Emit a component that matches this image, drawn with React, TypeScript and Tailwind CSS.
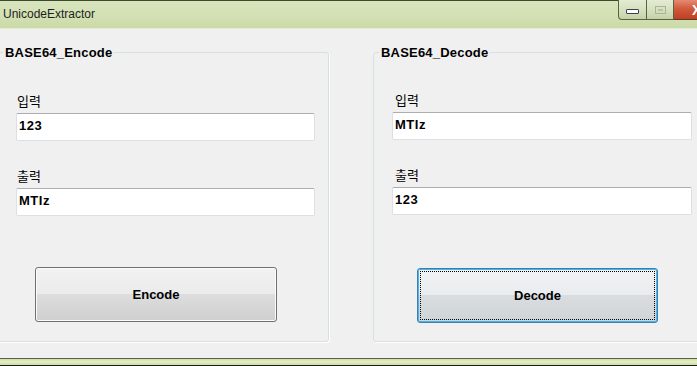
import React from 'react'

const ui = { fontFamily: '"Liberation Sans", Arial, sans-serif' }
const kr = { fontFamily: '"Noto Sans CJK KR", "Noto Sans", sans-serif' }

function Field({ label, value, width, labelOffset }: { label: string; value: string; width: string; labelOffset: string }) {
  return (
    <div className="flex flex-col">
      <div className={`text-[13px] leading-[16px] text-black ${labelOffset}`} style={kr}>
        {label}
      </div>
      <div
        className={`mt-[4px] h-[28px] ${width} bg-white border border-[#dbdfe6] border-t-[#abadb3] rounded-[2px] pl-[2px] pt-[4px] text-[13px] leading-[15px] tracking-[0.5px] font-bold text-black`}
        style={ui}
      >
        {value}
      </div>
    </div>
  )
}

export default function App() {
  return (
    <div className="w-[697px] h-[366px] overflow-hidden flex flex-col bg-[#f0f0f0]" style={ui}>
      {/* Title bar */}
      <div className="h-[29px] shrink-0 flex items-start justify-between border-t border-[#3c4a2a] border-b border-b-[#e4ebd3] bg-[linear-gradient(to_bottom,#d8e4bd_0%,#d4e1b5_50%,#cbdaa7_100%)]">
        <span className="ml-[3px] mt-[6px] text-[12px] leading-[15px] text-[#1e1e1e]" style={ui}>
          UnicodeExtractor
        </span>
        <div className="flex items-start -mt-px -mr-[21px]">
          <div className="w-[29px] h-[20px] flex items-center justify-center border border-t-0 border-[#56653f] rounded-bl-[4px] bg-[linear-gradient(to_bottom,#e3ebd2_0%,#d6e1c0_50%,#c4d2a6_100%)]">
            <div className="mt-[3px] w-[13px] h-[5px] bg-white border border-[#3a3f52] rounded-[1px]" />
          </div>
          <div className="w-[27px] h-[20px] flex items-center justify-center border border-t-0 border-l-0 border-[#56653f] bg-[linear-gradient(to_bottom,#e3ebd2_0%,#d6e1c0_50%,#c4d2a6_100%)]">
            <div className="w-[11px] h-[8px] border border-[#a9b39a] flex items-center justify-center">
              <div className="w-[5px] h-[2px] border border-[#b8c1a9]" />
            </div>
          </div>
          <div className="w-[44px] h-[20px] flex items-center justify-start pl-[18px] border border-t-0 border-l-0 border-[#5a3a2c] bg-[linear-gradient(to_bottom,#e48a72_0%,#d15a3c_45%,#c13f22_100%)]">
            <span className="text-white font-bold text-[14px] leading-[14px]">X</span>
          </div>
        </div>
      </div>

      {/* Body */}
      <div className="flex-1 flex items-start pt-[16px]">
        <fieldset className="h-[297px] w-[331px] shrink-0 -ml-[2px] border border-[#d5dfe5] rounded-[3px] shadow-[1px_1px_0_#ffffff] pl-[17px] pt-[33px]">
          <legend className="-ml-[13px] px-[2px] h-[15px] text-[13px] leading-[15px] tracking-[0.2px] font-bold text-black" style={ui}>
            BASE64_Encode
          </legend>
          <div className="flex flex-col gap-[27px]">
            <Field label="입력" value="123" width="w-[299px]" labelOffset="ml-[1px]" />
            <Field label="출력" value="MTIz" width="w-[299px]" labelOffset="ml-[1px]" />
          </div>
          <button className="mt-[51px] ml-[19px] w-[242px] h-[55px] border border-[#707070] rounded-[3px] shadow-[inset_0_0_0_1px_#fbfbfb] bg-[linear-gradient(to_bottom,#f2f2f2_0%,#ebebeb_50%,#dddddd_50%,#cfcfcf_100%)] text-[13px] font-bold text-black" style={ui}>
            Encode
          </button>
        </fieldset>

        <fieldset className="h-[297px] w-[340px] shrink-0 ml-[44px] border border-[#d5dfe5] rounded-[3px] shadow-[1px_1px_0_#ffffff] pl-[18px] pt-[32px]">
          <legend className="-ml-[13px] px-[2px] h-[15px] text-[13px] leading-[15px] tracking-[0.2px] font-bold text-black" style={ui}>
            BASE64_Decode
          </legend>
          <div className="flex flex-col gap-[27px]">
            <Field label="입력" value="MTIz" width="w-[300px]" labelOffset="ml-[3px]" />
            <Field label="출력" value="123" width="w-[300px]" labelOffset="ml-[3px]" />
          </div>
          <button className="mt-[53px] ml-[25px] w-[241px] h-[55px] p-[2px] border border-[#3c7fb1] rounded-[3px] shadow-[inset_0_0_0_1px_#48b4ec] bg-[linear-gradient(to_bottom,#f1f3f4_0%,#e9ecee_50%,#d9dde0_50%,#cfd4d7_100%)] text-[13px] font-bold text-black" style={ui}>
            <div className="w-full h-full border border-dotted border-black flex items-center justify-center">
              Decode
            </div>
          </button>
        </fieldset>
      </div>

      {/* Bottom frame */}
      <div className="h-[8px] shrink-0 border-t border-[#56653f] border-b border-b-[#1b1f14] bg-[linear-gradient(to_bottom,#cfdda6_0%,#e6eecb_45%,#cfdca4_100%)]" />
    </div>
  )
}
